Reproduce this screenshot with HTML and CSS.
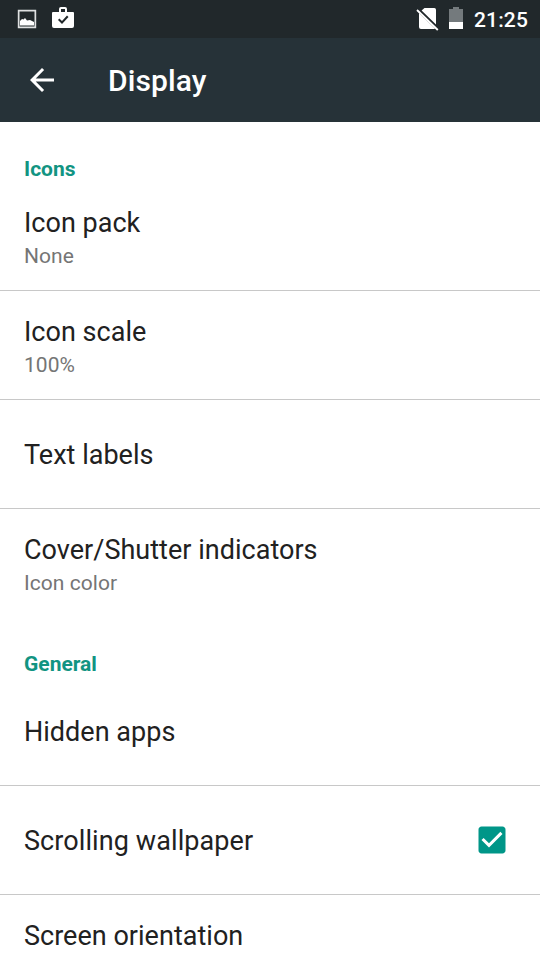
FILE: index.html
```html
<!DOCTYPE html>
<html lang="en">
<head>
<meta charset="utf-8">
<title>Display</title>
<link rel="stylesheet" href="styles.css">
</head>
<body>
<header class="status">
  <svg class="icon-image" width="20" height="20" viewBox="0 0 20 20"><path fill="#dfe1e2" fill-rule="evenodd" d="M.8.8h18.400v18.400H.8zM2.500 2.500v15h15v-15z"/><path fill="#fff" d="M3 16.500V12l2-2 1.500.5L8 9l2 2.500 3-.5 2 1 2 1v3.500z"/></svg>
  <svg class="icon-bag" width="24" height="24" viewBox="0 0 24 24"><path fill="#fff" fill-rule="evenodd" d="M8 6V3q0-2 2-2h4q2 0 2 2v3h6q1 0 1 1v13q0 2-2 2H3q-2 0-2-2V7q0-1 1-1zm2 0h4V3h-4zM8.300 12.500L7 14l4 4 6.500-7L16 9.500l-5 5.500z"/></svg>
  <span class="spacer"></span>
  <svg class="icon-sim" width="24" height="24" viewBox="0 0 24 24"><path fill="#fff" d="M8.500 1h9.800q1.700 0 1.700 1.700v14.800L5.600 3.600zM3 6l16 15.500-.8.500H5q-2 0-2-2z"/><path stroke="#fff" stroke-width="1.800" d="M1 3l20.800 20"/></svg>
  <svg class="icon-battery" width="14" height="22" viewBox="0 0 14 22"><path fill="#747a7d" d="M4 0h6v2h4v13H0V2h4z"/><path fill="#fff" d="M0 15h14v7H0z"/></svg>
  <span class="clock">21:25</span>
</header>
<nav class="toolbar">
  <svg class="back" width="36" height="36" viewBox="0 0 24 24"><path fill="#fff" d="M20 11H7.830l5.590-5.590L12 4l-8 8 8 8 1.410-1.410L7.830 13H20z"/></svg>
  <h1>Display</h1>
</nav>
<main>
  <h2 class="section">Icons</h2>
  <div class="row two first"><span class="title">Icon pack</span><span class="summary">None</span></div>
  <div class="row two"><span class="title">Icon scale</span><span class="summary">100%</span></div>
  <div class="row"><span class="title">Text labels</span></div>
  <div class="row two last"><span class="title">Cover/Shutter indicators</span><span class="summary">Icon color</span></div>
  <h2 class="section general">General</h2>
  <div class="row"><span class="title">Hidden apps</span></div>
  <div class="row check"><span class="title">Scrolling wallpaper</span><svg width="36" height="36" viewBox="0 0 24 24"><path fill="#009688" d="M19 3H5c-1.110 0-2 .9-2 2v14c0 1.100.89 2 2 2h14c1.110 0 2-.9 2-2V5c0-1.100-.89-2-2-2zm-9 14l-5-5 1.410-1.410L10 14.170l7.590-7.590L19 8l-9 9z"/></svg></div>
  <div class="row two"><span class="title">Screen orientation</span></div>
</main>
</body>
</html>
```
FILE: styles.css
```css
* { box-sizing: border-box; }
body { margin: 0; height: 960px; overflow: hidden; background: #fff; font-family: Roboto, sans-serif; color: #212121; }
.status { height: 38px; background: #21282b; display: flex; align-items: flex-start; padding: 0 12px 0 17px; color: #fff; }
.icon-image { margin-top: 9px; }
.icon-bag { margin: 6px 0 0 14px; }
.spacer { flex: 1; }
.icon-sim { margin: 7px 9px 0 0; }
.icon-battery { margin: 7px 11px 0 0; }
.clock { font-size: 21px; font-weight: 500; line-height: 41px; letter-spacing: 0.15px; }
.toolbar { height: 84px; background: #263238; display: flex; align-items: center; padding-left: 24px; color: #fff; }
h1 { margin: 2px 0 0 48px; font-size: 30px; font-weight: 500; line-height: 36px; letter-spacing: 0.1px; }
main { padding-top: 24px; }
.section { margin: 0; padding-left: 24px; height: 46px; line-height: 46px; font-size: 21px; font-weight: 700; color: #129482; }
.general { height: 59px; padding-top: 33px; line-height: 26px; }
.row { height: 109px; border-bottom: 1px solid #c8c8c8; padding: 2px 24px 0; display: flex; flex-direction: column; justify-content: center; }
.two { justify-content: flex-start; padding-top: 23px; }
.first { height: 99px; padding-top: 13px; }
.last { border-bottom: 0; }
.title { font-size: 27px; line-height: 36px; letter-spacing: 0.02px; }
.summary { font-size: 21px; line-height: 30px; color: #757575; letter-spacing: 0.05px; }
.check { flex-direction: row; align-items: center; justify-content: space-between; padding-right: 30px; }
.check .title { letter-spacing: 0.09px; }
.check svg { margin-top: -2px; }
```
